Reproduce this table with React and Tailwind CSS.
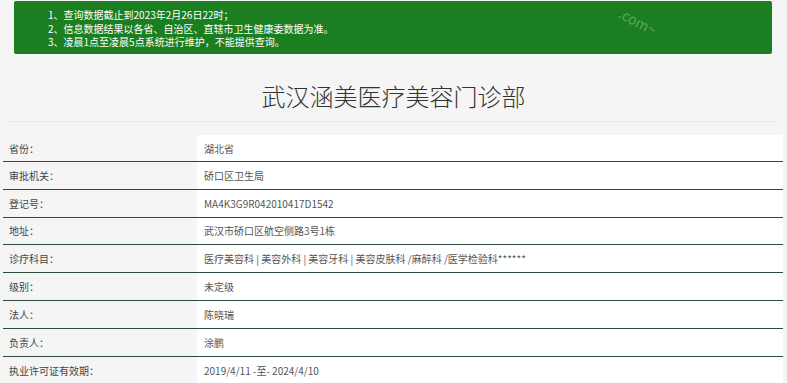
import React from "react";

const rows = [
  ["省份：", "湖北省"],
  ["审批机关：", "硚口区卫生局"],
  ["登记号：", "MA4K3G9R042010417D1542"],
  ["地址：", "武汉市硚口区航空侧路3号1栋"],
  ["诊疗科目：", "医疗美容科 | 美容外科 | 美容牙科 | 美容皮肤科 /麻醉科 /医学检验科******"],
  ["级别：", "未定级"],
  ["法人：", "陈晓瑞"],
  ["负责人：", "涂鹏"],
  ["执业许可证有效期：", "2019/4/11 -至- 2024/4/10"],
];

export default function App() {
  return (
    <div
      className="w-[787px] h-[383px] overflow-hidden bg-[#f5f5f5] text-[#333]"
      style={{ fontFamily: '"Noto Sans CJK SC", "Noto Sans", sans-serif' }}
    >
      <div className="pt-[1px] px-[14px]">
        <div className="relative overflow-hidden h-[53px] w-[758px] rounded-[2px] bg-[#1b7f22] pl-[34px] pt-[7px] text-[10px] leading-[13.5px] text-white">
          <div>1、查询数据截止到2023年2月26日22时；</div>
          <div>2、信息数据结果以各省、自治区、直辖市卫生健康委数据为准。</div>
          <div>3、凌晨1点至凌晨5点系统进行维护，不能提供查询。</div>
          <div className="absolute left-[604px] top-[12px] rotate-[28deg] text-[14px] leading-[16px] text-white/30">.com~</div>
        </div>
      </div>
      <div className="mx-[10px] mt-[16px] h-[52px] border-b border-[#e8e8e8] flex items-center justify-center">
        <h1 className="text-[24px] font-light text-[#333]">武汉涵美医疗美容门诊部</h1>
      </div>
      <div className="mt-[13px] ml-[3px] w-[780px]">
        {rows.map(([k, v], i) => (
          <div
            key={i}
            className={
              "flex text-[10px] " +
              (i === 0 ? "h-[27px] " : "h-[27.8px] ") +
              (i < rows.length - 1 ? "border-b border-[#2f4a3f]" : "")
            }
          >
            <div className="w-[194px] shrink-0 flex items-center pl-[6px] text-[#444]">{k}</div>
            <div className="flex-1 bg-white flex items-center pl-[7px] text-[#555]">{v}</div>
          </div>
        ))}
      </div>
    </div>
  );
}
